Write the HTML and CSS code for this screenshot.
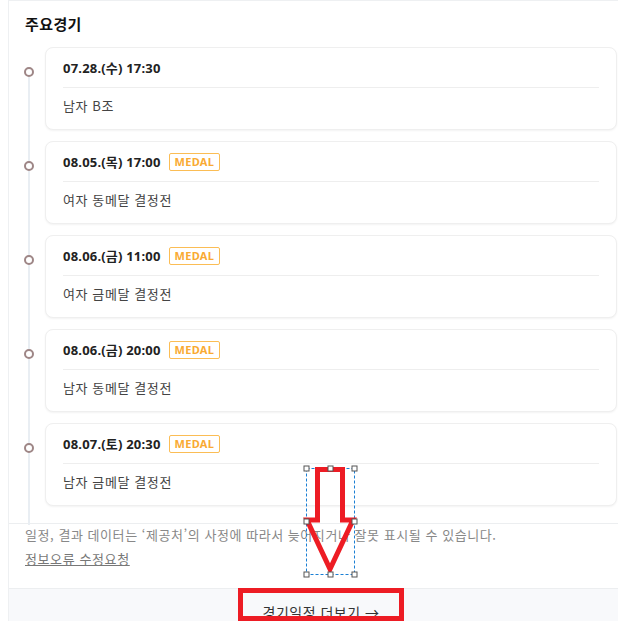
FILE: index.html
```html
<!DOCTYPE html>
<html lang="ko">
<head>
<meta charset="utf-8">
<title>주요경기</title>
<link rel="stylesheet" href="styles.css">
</head>
<body>
<div class="panel">
  <div class="main">
    <h2 class="title">주요경기</h2>
    <ul class="timeline">
      <li class="match">
        <div class="match-head"><span class="date">07.28.(수) 17:30</span></div>
        <div class="match-body">남자 B조</div>
      </li>
      <li class="match">
        <div class="match-head"><span class="date">08.05.(목) 17:00</span><span class="badge">MEDAL</span></div>
        <div class="match-body">여자 동메달 결정전</div>
      </li>
      <li class="match">
        <div class="match-head"><span class="date">08.06.(금) 11:00</span><span class="badge">MEDAL</span></div>
        <div class="match-body">여자 금메달 결정전</div>
      </li>
      <li class="match">
        <div class="match-head"><span class="date">08.06.(금) 20:00</span><span class="badge">MEDAL</span></div>
        <div class="match-body">남자 동메달 결정전</div>
      </li>
      <li class="match">
        <div class="match-head"><span class="date">08.07.(토) 20:30</span><span class="badge">MEDAL</span></div>
        <div class="match-body">남자 금메달 결정전</div>
      </li>
    </ul>
  </div>
  <div class="notice">
    <p class="notice-text">일정, 결과 데이터는 ‘제공처’의 사정에 따라서 늦어지거나 잘못 표시될 수 있습니다.</p>
    <a class="notice-link" href="#">정보오류 수정요청</a>
  </div>
  <div class="more">
    <a class="more-link" href="#">경기일정 더보기 →</a>
  </div>
</div>

<svg class="annot" width="618" height="621" viewBox="0 0 618 621" xmlns="http://www.w3.org/2000/svg">
  <rect x="306.5" y="468.5" width="48" height="106" fill="none" stroke="#1a7fd4" stroke-width="1" stroke-dasharray="3 2"/>
  <polygon points="317.5,469.5 342.5,469.5 342.5,520 353,520 330,569 307,520 317.5,520" fill="none" stroke="#ed1c24" stroke-width="5" stroke-linejoin="miter"/>
  <g fill="#fff" stroke="#555" stroke-width="1">
    <rect x="304" y="466" width="5" height="5"/>
    <rect x="328" y="466" width="5" height="5"/>
    <rect x="352" y="466" width="5" height="5"/>
    <rect x="304" y="519" width="5" height="5"/>
    <rect x="352" y="519" width="5" height="5"/>
    <rect x="304" y="572" width="5" height="5"/>
    <rect x="328" y="572" width="5" height="5"/>
    <rect x="352" y="572" width="5" height="5"/>
  </g>
  <rect x="240.5" y="590.5" width="161" height="28" fill="none" stroke="#ed1c24" stroke-width="5"/>
</svg>
</body>
</html>
```

FILE: styles.css
```css
html, body {
  margin: 0;
  padding: 0;
  overflow: hidden;
  background: #fff;
}

body {
  font-family: "Noto Sans CJK KR", "Noto Sans", sans-serif;
  color: #222;
  width: 618px;
  height: 621px;
  position: relative;
}

.panel {
  margin-left: 8px;
  width: 624px;
  border: 1px solid #eef0f2;
  background: #fff;
}

.main {
  padding: 12px 16px 17px 16px;
}

.title {
  margin: 0 0 12px 0;
  font-size: 15px;
  line-height: 22px;
  font-weight: 700;
  color: #111;
  letter-spacing: 0.4px;
}

.timeline {
  list-style: none;
  margin: 0;
  padding: 0 0 0 20px;
  position: relative;
  display: flex;
  flex-direction: column;
  gap: 11px;
}

.timeline::before {
  content: "";
  position: absolute;
  left: 3px;
  top: 30px;
  bottom: -19px;
  width: 2px;
  background: #e9eef3;
}

.match {
  position: relative;
  border: 1px solid #efefef;
  border-radius: 8px;
  box-shadow: 0 1px 2px rgba(0, 0, 0, 0.05);
  padding: 0 17px 0 17px;
  background: #fff;
}

.match::before {
  content: "";
  position: absolute;
  left: -22px;
  top: 19px;
  width: 6px;
  height: 6px;
  border: 2px solid #9e8686;
  border-radius: 50%;
  background: #fff;
}

.match-head {
  height: 39px;
  display: flex;
  align-items: center;
  gap: 8px;
  border-bottom: 1px solid #eeeeee;
}

.date {
  font-family: "Noto Sans", "Noto Sans CJK KR", sans-serif;
  font-size: 13px;
  font-weight: 700;
  color: #222;
  letter-spacing: 0.2px;
}

.badge {
  font-family: "Noto Sans", sans-serif;
  display: inline-flex;
  align-items: center;
  height: 16px;
  padding: 0 5px;
  border: 1px solid #fbbd55;
  border-radius: 2px;
  font-size: 11px;
  font-weight: 700;
  color: #f9aa33;
  letter-spacing: 0.3px;
}

.match-body {
  padding: 8px 0 13px 0;
  font-size: 13px;
  line-height: 20px;
  color: #444;
  letter-spacing: 0.6px;
}

.notice {
  border-top: 1px solid #eceef0;
  padding: 1px 16px 19px 16px;
}

.notice-text {
  margin: 0;
  font-size: 13px;
  line-height: 20px;
  color: #888;
  letter-spacing: 0.55px;
}

.notice-link {
  display: inline-block;
  margin-top: 3px;
  font-size: 13px;
  line-height: 20px;
  color: #777;
  text-decoration: underline;
  letter-spacing: 0.6px;
}

.more {
  border-top: 1px solid #eceef0;
  background: #f8f9fb;
  padding: 10px 0 14px 0;
  text-align: center;
}

.more-link {
  font-size: 14px;
  line-height: 20px;
  color: #333;
  text-decoration: none;
  letter-spacing: 0.5px;
}

.annot {
  position: absolute;
  left: 0;
  top: 0;
  pointer-events: none;
}
```
